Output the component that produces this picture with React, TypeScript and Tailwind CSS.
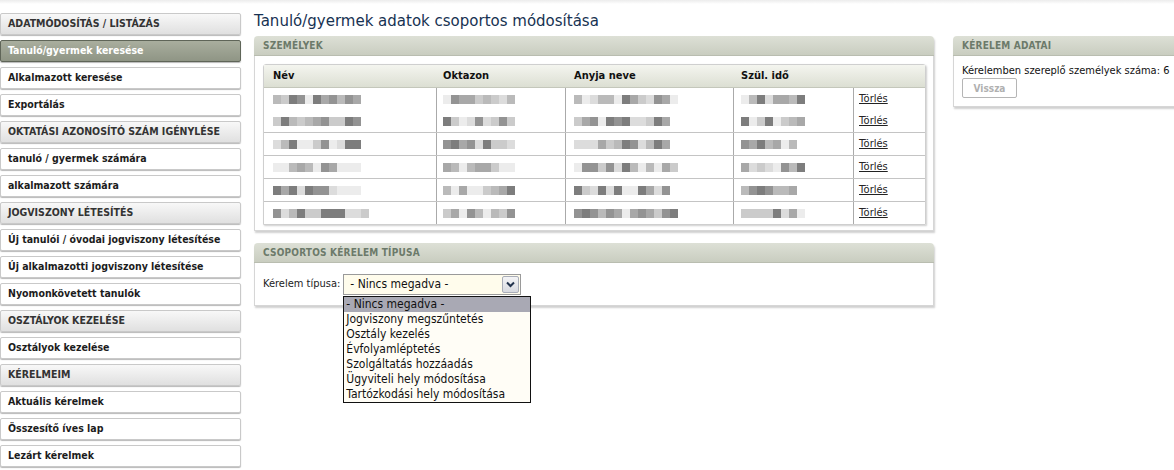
import React from "react";

type Item = { t: string; k: "h" | "a" | "i" };

const side: Item[] = [
  { t: "ADATMÓDOSÍTÁS / LISTÁZÁS", k: "h" },
  { t: "Tanuló/gyermek keresése", k: "a" },
  { t: "Alkalmazott keresése", k: "i" },
  { t: "Exportálás", k: "i" },
  { t: "OKTATÁSI AZONOSÍTÓ SZÁM IGÉNYLÉSE", k: "h" },
  { t: "tanuló / gyermek számára", k: "i" },
  { t: "alkalmazott számára", k: "i" },
  { t: "JOGVISZONY LÉTESÍTÉS", k: "h" },
  { t: "Új tanulói / óvodai jogviszony létesítése", k: "i" },
  { t: "Új alkalmazotti jogviszony létesítése", k: "i" },
  { t: "Nyomonkövetett tanulók", k: "i" },
  { t: "OSZTÁLYOK KEZELÉSE", k: "h" },
  { t: "Osztályok kezelése", k: "i" },
  { t: "KÉRELMEIM", k: "h" },
  { t: "Aktuális kérelmek", k: "i" },
  { t: "Összesítő íves lap", k: "i" },
  { t: "Lezárt kérelmek", k: "i" },
];

const shades = [
  "bg-[#ececec]",
  "bg-[#dcdcdc]",
  "bg-[#cbcbcb]",
  "bg-[#bababa]",
  "bg-[#a8a8a8]",
  "bg-[#939393]",
  "bg-[#7d7d7d]",
];

function Blur({ seed, n }: { seed: number; n: number }) {
  const blocks: number[] = [];
  let s = seed * 9301 + 49297;
  for (let i = 0; i < n; i++) {
    s = (s * 9301 + 49297) % 233280;
    blocks.push(Math.floor((s / 233280) * shades.length));
  }
  return (
    <div className="flex h-[9px]">
      {blocks.map((b, i) => (
        <div key={i} className={`w-[8px] h-[9px] ${shades[b]}`} />
      ))}
    </div>
  );
}

const cols = [
  "w-[173px] pl-[9px]",
  "w-[129px] pl-[6px]",
  "w-[168px] pl-[8px]",
  "w-[120px] pl-[7px]",
  "flex-1 pl-[5px]",
];

const lens = [
  [11, 9, 13, 8],
  [11, 9, 12, 8],
  [11, 9, 12, 7],
  [11, 9, 13, 8],
  [11, 9, 12, 7],
  [12, 9, 13, 8],
];

const font = "font-['DejaVu_Sans_Condensed','DejaVu_Sans',sans-serif]";

function Line({ idx }: { idx: number }) {
  return (
    <div className="flex h-[22px] items-center">
      {lens[idx].map((n, c) => (
        <div key={c} className={`${cols[c]} h-full flex items-center`}>
          <Blur seed={idx * 7 + c * 3 + 1} n={n} />
        </div>
      ))}
      <div className={`${cols[4]} h-full flex items-center`}>
        <a className="underline text-[#222] text-[11px] cursor-pointer">Törlés</a>
      </div>
    </div>
  );
}

function Row({ lines, first }: { lines: number[]; first?: boolean }) {
  return (
    <div className={`relative ${first ? "" : "border-t border-[#c4c4c4]"}`}>
      <div className="absolute inset-0 flex pointer-events-none">
        <div className="w-[173px] border-r border-[#aaaaaa]" />
        <div className="w-[129px] border-r border-[#aaaaaa]" />
        <div className="w-[168px] border-r border-[#aaaaaa]" />
        <div className="w-[120px] border-r border-[#aaaaaa]" />
      </div>
      {lines.map((l) => (
        <Line key={l} idx={l} />
      ))}
    </div>
  );
}

function PanelHead({ t }: { t: string }) {
  return (
    <div className="h-[20px] flex items-center pl-[9px] rounded-t-[4px] bg-gradient-to-b from-[#dde0d6] to-[#c9cdc0] border-b border-[#b9bdb0] text-[10px] font-bold text-[#6c7a6a] tracking-[0.2px]">
      {t}
    </div>
  );
}

export default function App() {
  return (
    <div className={`w-[1174px] h-[470px] overflow-hidden bg-white relative ${font}`}>
      <div className="h-[4px] bg-gradient-to-b from-[#ececec] to-white absolute top-0 left-0 right-0" />
      <div className="flex">
        {/* Sidebar */}
        <div className="w-[241px] shrink-0 pt-[13px] flex flex-col gap-[5px]">
          {side.map((s, i) => {
            const base =
              "h-[22px] flex items-center pl-[7px] border rounded-[2px] text-[10.5px] font-bold whitespace-nowrap shadow-[0_1px_1px_#b8b8b8]";
            const cls =
              s.k === "h"
                ? "bg-gradient-to-b from-[#f8f8f8] to-[#e0e0e0] border-[#c9c9c9] text-[#333]"
                : s.k === "a"
                ? "bg-gradient-to-b from-[#a9ae9e] to-[#8f9585] border-[#5f6558] text-white"
                : "bg-white border-[#c9c9c9] text-[#1c1c1c]";
            return (
              <div key={i} className={`${base} ${cls}`}>
                {s.t}
              </div>
            );
          })}
        </div>

        {/* Main */}
        <div className="ml-[13px] flex-1">
          <div className="h-[36px] pt-[11px] text-[15px] leading-[20px] text-[#173252] font-['DejaVu_Sans',sans-serif]">
            Tanuló/gyermek adatok csoportos módosítása
          </div>
          <div className="flex gap-[19px] items-start">
            <div className="w-[680px] shrink-0 relative">
              {/* SZEMÉLYEK */}
              <div className="shadow-[1px_2px_2px_#d0d0d0] rounded-t-[4px]">
                <PanelHead t="SZEMÉLYEK" />
                <div className="bg-white border-x border-b border-[#d6d6d6] pt-[8px] pb-[5px] pl-[8px] pr-[7px]">
                  <div className="border border-[#cfcfcf] rounded-t-[3px] shadow-[1px_1px_2px_#cfcfcf] text-[11px] text-[#111]">
                    <div className="h-[23px] flex items-center bg-gradient-to-b from-[#f4f5ef] to-[#dcdfd3] border-b border-[#c4c7bb] font-bold">
                      <div className={cols[0]}>Név</div>
                      <div className={cols[1]}>Oktazon</div>
                      <div className={cols[2]}>Anyja neve</div>
                      <div className={cols[3]}>Szül. idő</div>
                      <div className={cols[4]}></div>
                    </div>
                    <Row lines={[0, 1]} first />
                    <Row lines={[2]} />
                    <Row lines={[3]} />
                    <Row lines={[4]} />
                    <Row lines={[5]} />
                  </div>
                </div>
              </div>

              {/* CSOPORTOS */}
              <div className="mt-[12px] shadow-[1px_2px_2px_#d0d0d0] rounded-t-[4px]">
                <PanelHead t="CSOPORTOS KÉRELEM TÍPUSA" />
                <div className="bg-white border-x border-b border-[#d6d6d6] h-[43px] flex items-center pl-[8px] text-[11px] text-[#222]">
                  <span className="mr-[3px]">Kérelem típusa:</span>
                  <div className="relative w-[178px] h-[21px] border border-[#9a9a9a] bg-[#fffcec] flex items-center pl-[6px] text-[12px] text-[#111]">
                    - Nincs megadva -
                    <div className="absolute right-[1px] top-[1px] w-[17px] h-[17px] border border-[#a9adb8] rounded-[2px] bg-gradient-to-b from-[#f4f4f6] to-[#d8dae0] flex items-center justify-center">
                      <svg width="9" height="7" viewBox="0 0 9 7">
                        <path d="M1 1.5 L4.5 5 L8 1.5" fill="none" stroke="#23334d" strokeWidth="2" />
                      </svg>
                    </div>
                    {/* dropdown list */}
                    <div className="absolute left-[-1px] top-[21px] w-[188px] border border-[#111] bg-[#fffdf6] z-10 text-[12px] leading-[15px] text-[#111]">
                      <div className="bg-[#a9a9b4] pl-[2px]">- Nincs megadva -</div>
                      <div className="pl-[2px]">Jogviszony megszűntetés</div>
                      <div className="pl-[2px]">Osztály kezelés</div>
                      <div className="pl-[2px]">Évfolyamléptetés</div>
                      <div className="pl-[2px]">Szolgáltatás hozzáadás</div>
                      <div className="pl-[2px]">Ügyviteli hely módosítása</div>
                      <div className="pl-[2px]">Tartózkodási hely módosítása</div>
                    </div>
                  </div>
                </div>
              </div>
            </div>

            {/* Right panel */}
            <div className="w-[240px] shrink-0 shadow-[1px_2px_2px_#d0d0d0] rounded-t-[4px]">
              <PanelHead t="KÉRELEM ADATAI" />
              <div className="bg-white border-x border-b border-[#d6d6d6] h-[51px] pl-[8px] pt-[8px] text-[11px] text-[#111] leading-[13px]">
                <div>Kérelemben szereplő személyek száma: 6</div>
                <div className="mt-[1px] w-[55px] h-[20px] border border-[#b5b5b5] rounded-[2px] bg-white flex items-center justify-center text-[10px] font-bold text-[#b0b0b0]">
                  Vissza
                </div>
              </div>
            </div>
          </div>
        </div>
      </div>
    </div>
  );
}
